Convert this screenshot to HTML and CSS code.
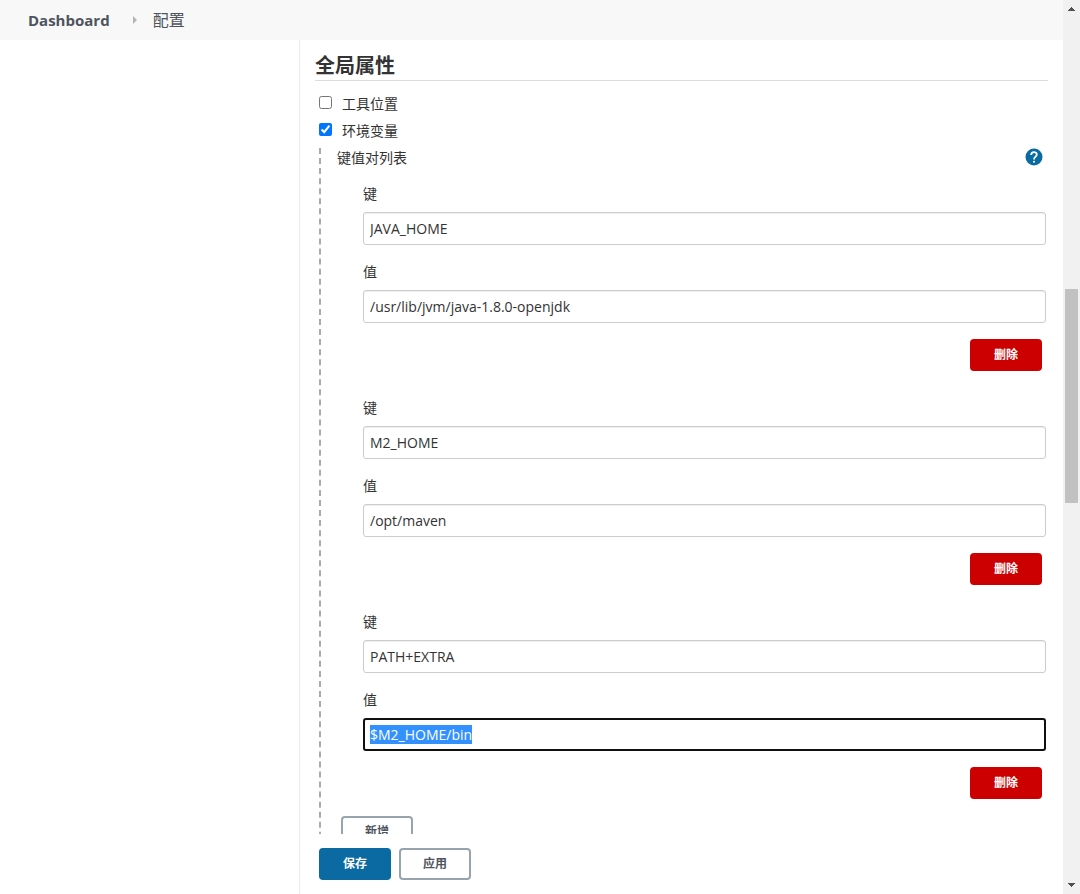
FILE: index.html
```html
<!DOCTYPE html>
<html lang="zh-CN">
<head>
<meta charset="utf-8">
<title>配置</title>
<link rel="stylesheet" href="styles.css">
</head>
<body>
<div class="app">
  <div class="page">
    <nav class="breadcrumbs">
      <a class="crumb crumb-home" href="#">Dashboard</a>
      <svg class="crumb-arrow" width="4" height="8" viewBox="0 0 4 8" aria-hidden="true"><path d="M0 0L4 4L0 8Z"/></svg>
      <a class="crumb" href="#">配置</a>
    </nav>
    <div class="columns">
      <aside class="side-panel"></aside>
      <main class="main-panel">
        <form class="config">
          <div class="config-body">
            <h2 class="section-title">全局属性</h2>
            <label class="option"><input class="check" type="checkbox">工具位置</label>
            <label class="option"><input class="check" type="checkbox" checked>环境变量</label>
            <section class="nested">
              <div class="list-head">
                <span>键值对列表</span>
                <button class="help" type="button" aria-label="帮助">
                  <svg width="18" height="18" viewBox="0 0 18 18" aria-hidden="true"><circle class="help-disc" cx="9" cy="9" r="8.5"/><path class="help-hook" d="M6.2 6.9C6.2 3.2 11.8 3.3 11.8 6.5C11.8 8.6 9 8.8 9 11.4"/><circle class="help-dot" cx="9" cy="13.7" r="1"/></svg>
                </button>
              </div>
              <div class="pairs">
                <div class="pair">
                  <label class="field">键<input class="text" type="text" value="JAVA_HOME"></label>
                  <label class="field">值<input class="text" type="text" value="/usr/lib/jvm/java-1.8.0-openjdk"></label>
                  <button class="button button-danger" type="button">删除</button>
                </div>
                <div class="pair">
                  <label class="field">键<input class="text" type="text" value="M2_HOME"></label>
                  <label class="field">值<input class="text" type="text" value="/opt/maven"></label>
                  <button class="button button-danger" type="button">删除</button>
                </div>
                <div class="pair">
                  <label class="field">键<input class="text" type="text" value="PATH+EXTRA"></label>
                  <label class="field">值<input class="text" id="active-value" type="text" value="$M2_HOME/bin"></label>
                  <button class="button button-danger" type="button">删除</button>
                </div>
              </div>
              <button class="button button-add" type="button">新增</button>
            </section>
          </div>
          <div class="actions">
            <button class="button button-primary" type="button">保存</button>
            <button class="button" type="button">应用</button>
          </div>
        </form>
      </main>
    </div>
  </div>
  <div class="scrollbar" aria-hidden="true">
    <svg class="scroll-arrow" width="7" height="4" viewBox="0 0 7 4"><path d="M3 0H4V1H5V2H6V3H7V4H0V3H1V2H2V1H3Z"/></svg>
    <div class="scroll-track"><div class="scroll-thumb"></div></div>
    <svg class="scroll-arrow" width="7" height="4" viewBox="0 0 7 4"><path d="M0 0H7V1H6V2H5V3H4V4H3V3H2V2H1V1H0Z"/></svg>
  </div>
</div>
<script src="script.js"></script>
</body>
</html>
```
FILE: styles.css
```css
* { box-sizing: border-box; }

body {
  margin: 0;
  background: #fff;
  color: #333;
  font: 14px/20px "Open Sans", "Noto Sans CJK SC", sans-serif;
}

button, input { font: inherit; color: inherit; }

.app { display: flex; height: 100vh; overflow: hidden; }

.page { flex: 1; min-width: 0; display: flex; flex-direction: column; }

.breadcrumbs {
  display: flex;
  align-items: center;
  height: 40px;
  padding-left: 28px;
  background: #f8f8f8;
  font-size: 16px;
}

.crumb { color: #4d545d; text-decoration: none; }
.crumb-home { font-size: 15px; font-weight: 700; }
.crumb-arrow { margin: 0 16px 0 23px; fill: #b4b4b4; }

.columns { flex: 1; min-height: 0; display: flex; }
.side-panel { width: 300px; flex-shrink: 0; border-right: 1px solid #ebebeb; }
.main-panel { flex: 1; min-width: 0; }

.config { display: flex; flex-direction: column; height: 100%; }

.config-body {
  flex: 1;
  min-height: 0;
  overflow: hidden;
  padding: 12px 15px 0;
}

.section-title {
  margin: 0 0 13px;
  border-bottom: 1px solid #dcdcdc;
  font-size: 20px;
  line-height: 28px;
}

.option { display: flex; align-items: center; height: 20px; margin-bottom: 7px; }
.check { width: 13px; height: 13px; margin: 0 10px 4px 4px; accent-color: #0075ff; }

.nested { margin-left: 4px; padding-bottom: 20px; border-left: 2px dashed #aaa; }

.list-head {
  display: flex;
  align-items: center;
  justify-content: space-between;
  height: 20px;
  padding: 0 5px 0 16px;
}

.help { display: flex; margin-bottom: 2px; padding: 0; border: 0; background: none; }
.help-disc { fill: #0b6aa2; }
.help-hook { fill: none; stroke: #fff; stroke-width: 1.8; }
.help-dot { fill: #fff; }

.pairs { display: grid; gap: 27px; padding: 16px 2px 17px 42px; }
.pair { display: flex; flex-direction: column; }

.field { display: flex; flex-direction: column; gap: 8px; margin-bottom: 17px; }
.field + .field { margin-bottom: 16px; }

.text {
  width: 100%;
  height: 33px;
  padding: 0 6px;
  border: 1px solid #ccc;
  border-radius: 3px;
  background: #fff;
  box-shadow: inset 0 1px 1px rgba(0, 0, 0, 0.07);
}

.text:focus { outline: 2px solid #101010; outline-offset: -2px; }
.text::selection { background: #3390ff; color: #fff; }

.button {
  width: 72px;
  height: 32px;
  padding: 0;
  border: 2px solid #98a4ad;
  border-radius: 4px;
  background: #fff;
  color: #4d545d;
  font-size: 12px;
  font-weight: 700;
}

.button-danger { align-self: flex-end; margin-right: 4px; border-color: #c00; background: #c00; color: #fff; }
.button-primary { border-color: #0b6aa2; background: #0b6aa2; color: #fff; }
.button-add { margin-left: 20px; }

.actions { display: flex; gap: 8px; padding: 14px 19px; }

.scrollbar {
  display: flex;
  flex-direction: column;
  align-items: center;
  width: 17px;
  padding: 7px 0;
  background: #f1f1f1;
}

.scroll-arrow { flex-shrink: 0; fill: #505050; }
.scroll-track { flex: 1; width: 13px; }
.scroll-thumb { height: 214px; margin-top: 278px; background: #c1c1c1; }
```
FILE: script.js
```js
const activeValue = document.getElementById("active-value");
activeValue.focus({ preventScroll: true });
activeValue.select();
```
